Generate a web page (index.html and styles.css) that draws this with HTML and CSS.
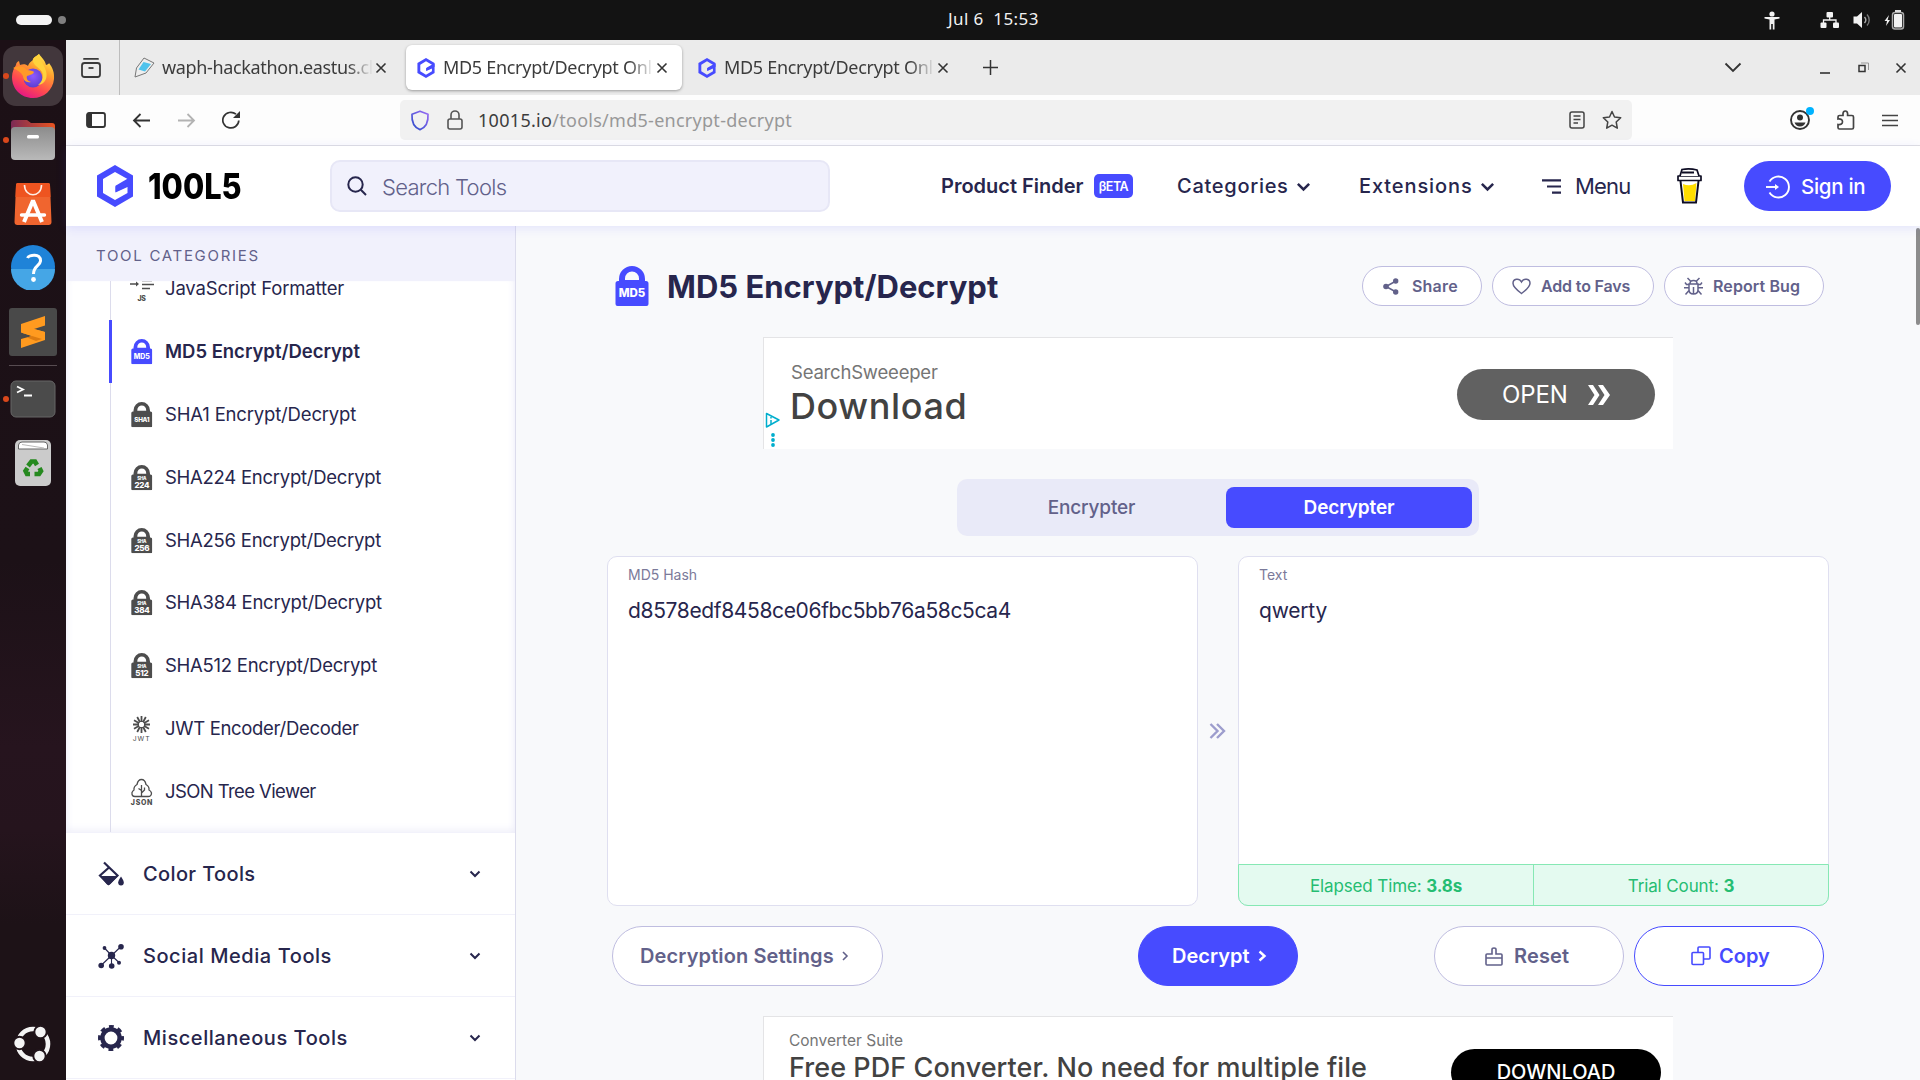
FILE: index.html
```html
<!DOCTYPE html>
<html lang="en">
<head>
<meta charset="utf-8">
<title>MD5 Encrypt/Decrypt Online</title>
<link rel="stylesheet" href="styles.css">
</head>
<body>
<svg class="defs" width="0" height="0">
  <defs>
    <symbol id="hex" viewBox="0 0 36 42">
      <path d="M18 0 36 10.500V31.500L18 42 0 31.500V10.500Z M18 7 6 14V28L18 35 30.500 28V22L18.500 27.500V21.500L26 17.500 30.500 15V14Z" fill="#474bff" fill-rule="evenodd"/>
      <path d="M30 14 L18.500 20.800V27L36 18.500V12Z" fill="#474bff"/>
    </symbol>
    <symbol id="x" viewBox="0 0 12 12"><path d="M1.500 1.500 10.500 10.500M10.500 1.500 1.500 10.500" stroke="#333" stroke-width="1.600" fill="none"/></symbol>
    <symbol id="chev" viewBox="0 0 12 8"><path d="M1.500 1.500 6 6 10.500 1.500" fill="none" stroke="currentColor" stroke-width="2"/></symbol>
    <symbol id="lock" viewBox="0 0 34 40">
      <path d="M4 15V13a13 13 0 0 1 26 0V15H31a2.500 2.500 0 0 1 2.500 2.500V38a2 2 0 0 1-2 2H2.500a2 2 0 0 1-2-2V17.500A2.500 2.500 0 0 1 3 15ZM10 14H24V12.500a7 7 0 0 0-14 0Z" fill="currentColor" fill-rule="evenodd"/>
    </symbol>
  </defs>
</svg>

<header class="topbar">
  <div class="workspaces"><i class="pill"></i><i class="dot"></i></div>
  <div class="clock">Jul 6&nbsp; 15:53</div>
  <div class="tray">
    <svg class="t-acc" width="16" height="19" viewBox="0 0 16 19" fill="#f2f2f2"><circle cx="8" cy="3" r="2.600"/><path d="M.5 6H15.500V7.600L10.500 8.600V18.500H8.800V13H7.200V18.500H5.500V8.600L.5 7.600Z"/></svg>
    <svg class="t-net" width="20" height="18" viewBox="0 0 20 18" fill="#f2f2f2"><rect x="6.500" y="1" width="6.500" height="5.500" rx="1"/><rect x=".5" y="11.500" width="6" height="5.500" rx="1"/><rect x="13" y="11.500" width="6" height="5.500" rx="1"/><path d="M9.700 6V9M3.500 12V9H16V12" fill="none" stroke="#f2f2f2" stroke-width="1.300"/></svg>
    <svg class="t-vol" width="19" height="18" viewBox="0 0 19 18"><path d="M.5 5.500H4L9 1V17L4 12.500H.5Z" fill="#f2f2f2"/><path d="M11.500 6a4.500 4.500 0 0 1 0 6" stroke="#aaa" stroke-width="1.400" fill="none"/><path d="M14 3.500a8 8 0 0 1 0 11" stroke="#777" stroke-width="1.400" fill="none"/></svg>
    <svg class="t-bat" width="21" height="20" viewBox="0 0 21 20"><path d="M5 5 .5 11H3L2 16 6 10H3.600Z" fill="#f2f2f2"/><rect x="8.500" y="2.500" width="11" height="16.500" rx="2.500" fill="none" stroke="#aaa" stroke-width="1.500"/><rect x="10" y="4" width="8" height="13.500" rx="1" fill="#f2f2f2"/><rect x="11" y="0" width="6" height="2" fill="#ddd"/></svg>
  </div>
</header>

<div class="desk">
<nav class="dock">
  <div class="slot tile run">
    <svg width="44" height="46" viewBox="0 0 44 46">
      <defs><linearGradient id="ff" x1=".8" y1="0" x2=".3" y2="1"><stop offset="0" stop-color="#fff44f"/><stop offset=".35" stop-color="#ff9f2e"/><stop offset=".7" stop-color="#ff4a50"/><stop offset="1" stop-color="#e31587"/></linearGradient>
      <radialGradient id="fp" cx=".5" cy=".4" r=".6"><stop offset="0" stop-color="#9059ff"/><stop offset="1" stop-color="#5b3fd0"/></radialGradient></defs>
      <path d="M28 1C31 5 34 7 35 12 37 11 38 11 38 10 42 15 43.500 20 43 26 42 37 33 45 22 45 10 45 1 36 1 24 1 19 3 15 5 12 5 10 6 9 8 8L9 12C12 11 15 11 17 13 18 9 22 8 22 6 24 3 26 3 28 1Z" fill="url(#ff)"/>
      <circle cx="22" cy="25" r="9.500" fill="url(#fp)"/>
      <path d="M2 15C8 12 13 13 16 17 19 17 22 18 23 19 22 22 18 22 16 23 15 26 17 28 20 29 15 30 12 27 12 23 10 19 6 17 2 15Z" fill="#ff9a28"/>
      <path d="M22 6C21 12 28 14 31 19 33 24 31 29 27 32 34 31 37 25 35 18 34 13 30 10 28 1 26 3 24 3 22 6Z" fill="#ffd23c"/>
    </svg>
  </div>
  <div class="slot files run"><svg width="46" height="42" viewBox="0 0 46 42"><defs><linearGradient id="fo"><stop offset="0" stop-color="#7c2a55"/><stop offset="1" stop-color="#e95420"/></linearGradient><linearGradient id="fg" x2="0" y2="1"><stop offset="0" stop-color="#8c8c8c"/><stop offset="1" stop-color="#b9b9b9"/></linearGradient></defs><path d="M1 4Q1 1 4 1H17L21 4H42Q45 4 45 7V20H1Z" fill="url(#fo)"/><rect x="1" y="8" width="44" height="33" rx="4" fill="url(#fg)"/><rect x="17" y="16" width="12" height="3.500" rx="1.500" fill="#fff"/></svg></div>
  <div class="slot store"><svg width="38" height="44" viewBox="0 0 38 44"><path d="M4 1H34Q36 1 36 3L37.500 40Q37.500 43 34.500 43H3.500Q.5 43 .5 40L2 3Q2 1 4 1Z" fill="#f0652f"/><path d="M2 3Q2 1 4 1H34Q36 1 36 3L36.500 15H1.500Z" fill="#ee5420"/><path d="M10.500 3C10.500 16 27.500 16 27.500 3" stroke="#fdeee6" stroke-width="1.600" fill="none"/><path d="M10 40 19 18.500 28 40" stroke="#fff" stroke-width="4" fill="none" stroke-linejoin="bevel"/><path d="M7.500 33H30.500" stroke="#fff" stroke-width="3.400" stroke-linecap="round"/></svg></div>
  <div class="slot help"><svg width="46" height="46" viewBox="0 0 46 46"><circle cx="23" cy="23" r="22" fill="#1f83d8"/><path d="M1 25A22 22 0 0 0 45 25Z" fill="#45a6e6"/><path d="M17.500 14C19 10.500 31 9 30.500 17 30 22 23.500 22 23.500 30" fill="none" stroke="#fff" stroke-width="3"/><circle cx="23.500" cy="35.500" r="2.400" fill="#fff"/></svg></div>
  <div class="slot sub"><svg width="48" height="48" viewBox="0 0 48 48"><rect width="48" height="48" rx="3" fill="#494949"/><path d="M36 8V17.500L25 21 36 24V32L12 40V31L23 28 12 24.500V16Z" fill="#ff9a1f"/><path d="M12 24.500 23 28 36 32 36 24 25 21Z" fill="#ff9a1f"/><path d="M18 29.500 23 28 33 31 27 33Z" fill="#dd7b10"/></svg></div>
  <i class="dock-line"></i>
  <div class="slot term run"><svg width="46" height="38" viewBox="0 0 46 38"><rect x="1" y="1" width="44" height="36" rx="5" fill="#4b4b4b" stroke="#666"/><path d="M7 6.500 13 9.500 7 12.500M14 15.500H22" fill="none" stroke="#fff" stroke-width="1.800"/></svg></div>
  <div class="slot trash"><svg width="38" height="48" viewBox="0 0 38 48"><rect x="1" y="1" width="36" height="46" rx="5" fill="#cbcbcb"/><path d="M4.500 10V6Q5 3 8 3H30Q33 3 33.500 6V10Z" fill="#fff" stroke="#666"/><path d="M8 5.500 30 9" stroke="#bbb"/><g fill="none" stroke="#26891f" stroke-width="4.600"><path d="M14 27 17.500 22.500H21L23 26"/><path d="M25.500 29 27 32 25 35H20.500"/><path d="M16 35H13L11.500 32 13.500 29"/></g></svg></div>
  <div class="slot ubuntu"><svg width="38" height="38" viewBox="0 0 38 38"><circle cx="19" cy="19" r="15" fill="none" stroke="#f4f4f4" stroke-width="4.600"/><g fill="#f4f4f4" stroke="#20141a" stroke-width="2"><circle cx="5.500" cy="18" r="6.200"/><circle cx="26.500" cy="7" r="6.200"/><circle cx="25.500" cy="31" r="6.200"/></g></svg></div>
</nav>

<main class="window">
  <div class="tabs">
    <div class="tabview"><svg width="22" height="22" viewBox="0 0 22 22" fill="none" stroke="#3a3a3a" stroke-width="1.800"><path d="M4 1.900H18" stroke-linecap="round"/><rect x="2" y="6" width="18" height="14" rx="2.500"/><path d="M8.500 11H13.500"/></svg></div>
    <div class="tab">
      <svg class="fav" width="21" height="21" viewBox="0 0 21 21"><path d="M10 1 20 6 12 16 1 20 2.500 11Z" fill="#eee" stroke="#777"/><path d="M9.500 5 17 7 11 14.500 4.500 12.500Z" fill="#4fc3ec"/></svg>
      <span class="tab-t waph">waph-hackathon.eastus.cl</span><svg width="12" height="12"><use href="#x"/></svg>
    </div>
    <div class="tab active">
      <svg class="fav" width="18" height="20"><use href="#hex"/></svg>
      <span class="tab-t">MD5 Encrypt/Decrypt Onl</span><svg width="12" height="12"><use href="#x"/></svg>
    </div>
    <div class="tab">
      <svg class="fav" width="18" height="20"><use href="#hex"/></svg>
      <span class="tab-t">MD5 Encrypt/Decrypt Onl</span><svg width="12" height="12"><use href="#x"/></svg>
    </div>
    <svg class="newtab" width="15" height="15" viewBox="0 0 15 15"><path d="M7.500 0V15M0 7.500H15" stroke="#333" stroke-width="1.500"/></svg>
    <div class="winctl">
      <svg width="18" height="11" viewBox="0 0 18 11"><path d="M1.500 1.500 9 9 16.500 1.500" fill="none" stroke="#333" stroke-width="1.800"/></svg>
      <svg class="w-min" width="10" height="10" viewBox="0 0 10 10"><path d="M0 9H10" stroke="#333" stroke-width="1.600"/></svg>
      <svg class="w-max" width="11" height="11" viewBox="0 0 11 11"><path d="M3 1H10.500V8" fill="none" stroke="#999"/><rect x="1" y="3.500" width="6" height="6" fill="none" stroke="#333" stroke-width="1.500"/></svg>
      <svg class="w-cls" width="12" height="12"><use href="#x"/></svg>
    </div>
  </div>

  <div class="toolbar">
    <div class="navbtns">
      <svg width="20" height="16" viewBox="0 0 20 16"><rect x="1" y="1" width="18" height="14" rx="2" fill="none" stroke="#333" stroke-width="1.800"/><path d="M1 1H6V15H1Z" fill="#333"/></svg>
      <svg width="19" height="15" viewBox="0 0 19 15"><path d="M18 7.500H2M8.500 1 2 7.500 8.500 14" fill="none" stroke="#333" stroke-width="1.800"/></svg>
      <svg width="19" height="15" viewBox="0 0 19 15"><path d="M1 7.500H17M10.500 1 17 7.500 10.500 14" fill="none" stroke="#b3b3b3" stroke-width="1.800"/></svg>
      <svg width="19" height="18" viewBox="0 0 19 18"><path d="M16.800 9.500A8 7.800 0 1 1 14 3.200" fill="none" stroke="#333" stroke-width="1.700"/><path d="M18 0V7H11Z" fill="#333"/></svg>
    </div>
    <div class="url">
      <svg width="20" height="21" viewBox="0 0 20 21"><defs><linearGradient id="sh" x1="1" y1="0" x2="0" y2="1"><stop offset="0" stop-color="#9a6bf5"/><stop offset="1" stop-color="#2a4bc8"/></linearGradient></defs><path d="M10 1.200 18 4.200C18.500 12 15.500 17.500 10 19.600 4.500 17.500 1.500 12 2 4.200Z" fill="none" stroke="url(#sh)" stroke-width="1.700" stroke-linejoin="round"/></svg>
      <svg class="padlock" width="16" height="20" viewBox="0 0 16 20" fill="none" stroke="#555" stroke-width="1.600"><rect x="1" y="9" width="14" height="10" rx="2"/><path d="M4 9V5a4 4 0 0 1 8 0V9"/></svg>
      <span class="host">10015.io</span><span class="path">/tools/md5-encrypt-decrypt</span>
      <svg class="reader" width="16" height="18" viewBox="0 0 16 18" fill="none" stroke="#444" stroke-width="1.500"><rect x="1" y="1" width="14" height="16" rx="2"/><path d="M4.500 5H11.500M4.500 8.500H11.500M4.500 12H9"/></svg>
      <svg width="20" height="20" viewBox="0 0 20 20"><path d="M10 1.500 12.500 7 18.700 7.700 14.200 12 15.300 18.200 10 15.200 4.700 18.200 5.800 12 1.300 7.700 7.500 7Z" fill="none" stroke="#444" stroke-width="1.500" stroke-linejoin="round"/></svg>
    </div>
    <div class="tools">
      <svg width="26" height="28" viewBox="0 0 26 28"><circle cx="11" cy="17" r="9" fill="none" stroke="#333" stroke-width="1.900"/><circle cx="11" cy="14.500" r="3" fill="#333"/><path d="M5.500 19.500H16.500Q15 23.500 11 23.500T5.500 19.500Z" fill="#333"/><circle cx="21" cy="8" r="4" fill="#00b3ff"/></svg>
      <svg width="18" height="20" viewBox="0 0 18 20"><path d="M2.500 19Q1 19 1 17.500V14.500Q5.500 15 5.500 11.800T1 9V7Q1 5.500 2.500 5.500H6V3.500Q6.300 1 8.300 1T10.600 3.500V5.500H15Q16.500 5.500 16.500 7V17.500Q16.500 19 15 19Z" fill="none" stroke="#444" stroke-width="1.700"/></svg>
      <svg width="16" height="13" viewBox="0 0 16 13"><path d="M0 1.500H16M0 6.500H16M0 11.500H16" stroke="#444" stroke-width="1.500"/></svg>
    </div>
  </div>

  <div class="sitehead">
    <svg class="logo" width="36" height="42"><use href="#hex"/></svg>
    <span class="brand">100L5</span>
    <div class="search"><svg width="20" height="20" viewBox="0 0 20 20" fill="none" stroke="#27264d" stroke-width="2"><circle cx="8.500" cy="8.500" r="7.200"/><path d="M13.800 13.800 19 19"/></svg><span>Search Tools</span></div>
    <span class="finder">Product Finder</span><span class="beta">βETA</span>
    <span class="menu-t cat">Categories</span><svg class="hchev" width="15" height="10"><use href="#chev"/></svg>
    <span class="menu-t ext">Extensions</span><svg class="hchev" width="15" height="10"><use href="#chev"/></svg>
    <svg class="burger" width="19" height="15" viewBox="0 0 19 15"><path d="M0 1.300H19M5 7.500H19M10 13.700H19" stroke="#27264d" stroke-width="2.200"/></svg>
    <span class="menuword">Menu</span>
    <svg class="cup" width="25" height="36" viewBox="0 0 25 36"><path d="M6 16Q13 19 19.500 15L18 33H7.500Z" fill="#ffdd00"/><path d="M3.500 13 6 34.500H19L21.500 13" fill="none" stroke="#0d0c23" stroke-width="2"/><path d="M1 8H24V12.500H1Z" fill="#fff" stroke="#0d0c23" stroke-width="1.700" stroke-linejoin="round"/><path d="M3 8 5 1.500Q12.500 0 20 2L22 8" fill="#fff" stroke="#0d0c23" stroke-width="1.700"/><path d="M5 4.500H17" stroke="#0d0c23" stroke-width="2"/></svg>
    <div class="signin"><svg width="24" height="24" viewBox="0 0 24 24" fill="none" stroke="#fff" stroke-width="1.900"><path d="M3.500 6.500a10.500 10.500 0 1 1 0 11"/><path d="M0 12H11"/><path d="M9 9 13 12 9 15Z" fill="#fff" stroke="none"/></svg><span>Sign in</span></div>
  </div>

  <div class="page">
    <aside class="side">
      <div class="cathead">TOOL CATEGORIES</div>
      <div class="list"><div class="items">
        <div class="item"><svg width="26" height="28" viewBox="0 0 26 28"><path d="M0 9H7M12 1.500H24M12 5.500H22M12 9.500H24M12 13.500H20" stroke="#4d4d4d" stroke-width="1.400"/><path d="M6 6.500 9 9 6 11.500Z" fill="#4d4d4d"/><text x="11.500" y="26" class="svt" font-size="7" fill="#4d4d4d">JS</text></svg><span class="i-js">JavaScript Formatter</span></div>
        <div class="item on"><svg width="26" height="28" viewBox="0 0 26 28"><use href="#lock" x="1" y="1" width="21.500" height="25.300"/><text x="11.800" y="20.500" class="svt" font-size="7">MD5</text></svg><span>MD5 Encrypt/Decrypt</span></div>
        <div class="item"><svg width="26" height="28" viewBox="0 0 26 28"><use href="#lock" x="1" y="1" width="21.500" height="25.300"/><text x="11.800" y="21" class="svt" font-size="6.300">SHA1</text></svg><span class="i-1">SHA1 Encrypt/Decrypt</span></div>
        <div class="item"><svg width="26" height="28" viewBox="0 0 26 28"><use href="#lock" x="1" y="1" width="21.500" height="25.300"/><text x="11.800" y="16" class="svt" font-size="4.500">SHA</text><text x="11.800" y="23.700" class="svt" font-size="8">224</text></svg><span>SHA224 Encrypt/Decrypt</span></div>
        <div class="item"><svg width="26" height="28" viewBox="0 0 26 28"><use href="#lock" x="1" y="1" width="21.500" height="25.300"/><text x="11.800" y="16" class="svt" font-size="4.500">SHA</text><text x="11.800" y="23.700" class="svt" font-size="8">256</text></svg><span>SHA256 Encrypt/Decrypt</span></div>
        <div class="item"><svg width="26" height="28" viewBox="0 0 26 28"><use href="#lock" x="1" y="1" width="21.500" height="25.300"/><text x="11.800" y="16" class="svt" font-size="4.500">SHA</text><text x="11.800" y="23.700" class="svt" font-size="8">384</text></svg><span>SHA384 Encrypt/Decrypt</span></div>
        <div class="item"><svg width="26" height="28" viewBox="0 0 26 28"><use href="#lock" x="1" y="1" width="21.500" height="25.300"/><text x="11.800" y="16" class="svt" font-size="4.500">SHA</text><text x="11.800" y="23.700" class="svt" font-size="8">512</text></svg><span>SHA512 Encrypt/Decrypt</span></div>
        <div class="item"><svg width="26" height="28" viewBox="0 0 26 28"><path d="M11.500 1V7M11.500 12V18M3 9.500H9M14 9.500H20M7.200 2 10 7.200M13 11.800 15.800 17M15.800 2 13 7.200M10 11.800 7.200 17M4 5.200 9.200 8.200M13.800 10.800 19 13.800M19 5.200 13.800 8.200M9.200 10.800 4 13.800" stroke="#4d4d4d" stroke-width="1.800"/><text x="11.700" y="26" class="svt thin" font-size="6.800" fill="#4d4d4d">JWT</text></svg><span class="i-jwt">JWT Encoder/Decoder</span></div>
        <div class="item"><svg width="26" height="28" viewBox="0 0 26 28"><path d="M5 18.500Q1.500 18.500 2 14.500 3 12.500 4 12 3.500 8.500 7 6.500 8 1.500 11.500 1.500T16 6.500Q19.500 8.500 19 12 21 13 21.500 15 21.500 18.500 18 18.500ZM11.500 18.500V7M11.500 15 14.500 12V9.500M11.500 12.500 8.500 10.500" fill="none" stroke="#4d4d4d" stroke-width="1.300"/><text x="12" y="26.500" class="svt json" font-size="7" fill="#4d4d4d">JSON</text></svg><span class="i-json">JSON Tree Viewer</span></div>
      </div></div>
      <div class="cat-row"><svg width="26" height="26" viewBox="0 0 26 26" fill="none" stroke="#27264d" stroke-width="2.200"><path d="M6 1.500 19.500 14.500 10.500 23 2 14.500 11 6.500"/><path d="M2 15H20L12.500 23Q10.500 25 8.500 23Z" fill="#27264d" stroke="none"/><path d="M23 15.500Q25.800 19.500 25.800 21.500A2.800 3 0 0 1 20.200 21.500Q20.200 19.500 23 15.500Z" fill="#27264d" stroke="none"/></svg><span class="c1">Color Tools</span><svg class="rchev" width="12" height="8"><use href="#chev"/></svg></div>
      <div class="cat-row"><svg width="26" height="26" viewBox="0 0 26 26" fill="#27264d"><path d="M13.500 12.500 23 3.500M13.500 12.500 6.500 5M13.500 12.500 3 22.500M13.500 12.500V23M13.500 12.500 21 19.500" stroke="#27264d" stroke-width="1.100"/><circle cx="13.500" cy="12.500" r="3.700"/><circle cx="23" cy="3.700" r="2.800"/><circle cx="6.500" cy="5" r="1.900"/><circle cx="3.200" cy="22.500" r="2.800"/><circle cx="13.700" cy="23" r="2.800"/><circle cx="21" cy="19.700" r="2"/></svg><span class="c2">Social Media Tools</span><svg class="rchev" width="12" height="8"><use href="#chev"/></svg></div>
      <div class="cat-row"><svg width="26" height="26" viewBox="0 0 26 26"><circle cx="13" cy="13" r="8.600" fill="none" stroke="#27264d" stroke-width="4.400"/><circle cx="13" cy="13" r="11.500" fill="none" stroke="#27264d" stroke-width="3" stroke-dasharray="4.800 4.232" stroke-dashoffset="2.400"/></svg><span class="c3">Miscellaneous Tools</span><svg class="rchev" width="12" height="8"><use href="#chev"/></svg></div>
    </aside>

    <section class="content">
      <div class="titlebar">
        <svg class="biglock" width="34" height="40" viewBox="0 0 34 40"><use href="#lock" width="34" height="40"/><text x="17" y="31.200" class="svt" font-size="11.500">MD5</text></svg>
        <h1>MD5 Encrypt/Decrypt</h1>
        <div class="act share"><svg width="16" height="17" viewBox="0 0 16 17" fill="#62618a"><path d="M13 3 3 8.500 13 14" fill="none" stroke="#62618a" stroke-width="1.500"/><circle cx="12.700" cy="3" r="2.700"/><circle cx="3" cy="8.500" r="2.800"/><circle cx="12.700" cy="14" r="2.700"/></svg><span>Share</span></div>
        <div class="act favs"><svg width="19" height="17" viewBox="0 0 19 17"><path d="M9.500 15.500C4 11.500 1 8.500 1 5.300 1 1 7 -.5 9.500 4 12 -.5 18 1 18 5.300 18 8.500 15 11.500 9.500 15.500Z" fill="none" stroke="#62618a" stroke-width="1.500"/></svg><span>Add to Favs</span></div>
        <div class="act bug"><svg width="19" height="19" viewBox="0 0 19 19" fill="none" stroke="#62618a" stroke-width="1.500"><path d="M5 7H14V12.500Q14 17 9.500 17T5 12.500ZM6 6.500Q6 3.500 9.500 3.500T13 6.500M9.500 10V17M6.500 4 3.500 1M12.500 4 15.500 1M5 7.500H2.500L1 5.500M14 7.500H16.500L18 5.500M0 10.800H5M14 10.800H19M5 13.500 1.500 17.500M14 13.500 17.500 17.500"/></svg><span>Report Bug</span></div>
      </div>

      <div class="ad first">
        <div class="adicons"><svg width="16" height="36" viewBox="0 0 16 36"><path d="M1.500 1.500 14 8 1.500 15Z" fill="none" stroke="#00aecd" stroke-width="1.500" stroke-linejoin="round"/><path d="M6 5V6.500M6 8V12" stroke="#00aecd" stroke-width="1.500"/><g fill="#00aecd"><circle cx="8" cy="23" r="1.900"/><circle cx="8" cy="28" r="1.900"/><circle cx="8" cy="33" r="1.900"/></g></svg></div>
        <div class="adtext"><div class="adname">SearchSweeeper</div><div class="adbig">Download</div></div>
        <div class="open"><span>OPEN</span><svg width="22" height="20" viewBox="0 0 22 20" fill="#fff"><path d="M0 0H5L11.500 10 5 20H0L6.500 10ZM10 0H15L22 10 15 20H10L16.500 10Z"/></svg></div>
      </div>

      <div class="toggle"><div class="off">Encrypter</div><div class="sel">Decrypter</div></div>

      <div class="panes">
        <div class="pane"><label>MD5 Hash</label><div class="val hash">d8578edf8458ce06fbc5bb76a58c5ca4</div></div>
        <svg class="dbl" width="17" height="16" viewBox="0 0 17 16"><path d="M1.500 1 8.500 8 1.500 15M8 1 15 8 8 15" fill="none" stroke="#9d9dcd" stroke-width="2.400"/></svg>
        <div class="pane out"><label>Text</label><div class="val">qwerty</div>
          <div class="stats"><div>Elapsed Time: <b>3.8s</b></div><div>Trial Count: <b>3</b></div></div>
        </div>
      </div>

      <div class="actions">
        <div class="btn settings"><span>Decryption Settings</span><svg width="7" height="10" viewBox="0 0 7 10"><path d="M1 1 5 5 1 9" fill="none" stroke="currentColor" stroke-width="1.600"/></svg></div>
        <div class="btn decrypt"><span>Decrypt</span><svg width="9" height="12" viewBox="0 0 9 12"><path d="M1.500 1.500 6.500 6 1.500 10.500" fill="none" stroke="currentColor" stroke-width="2.400"/></svg></div>
        <div class="btn reset"><svg width="18" height="19" viewBox="0 0 18 19" fill="none" stroke="#62618a" stroke-width="1.600"><path d="M2 7H7V2.500Q7 1 9 1T11 2.500V7H16Q17 7 17 8V17Q17 18 16 18H2Q1 18 1 17V8Q1 7 2 7ZM1 11H17"/></svg><span>Reset</span></div>
        <div class="btn copy"><svg width="20" height="20" viewBox="0 0 20 20" fill="none" stroke="#474bff" stroke-width="1.600"><rect x="1" y="6.500" width="11.500" height="12" rx="1"/><path d="M7 6.500V2Q7 1 8 1H18Q19 1 19 2V12Q19 13 18 13H12.500"/></svg><span>Copy</span></div>
      </div>

      <div class="ad second">
        <div class="adtext"><div class="adname">Converter Suite</div><div class="adbig">Free PDF Converter. No need for multiple file</div></div>
        <div class="dl">DOWNLOAD</div>
      </div>
    </section>
    <i class="scroll"></i>
  </div>
</main>
</div>
</body>
</html>
```
FILE: styles.css
```css
* { box-sizing: border-box; }
body {
  margin: 0; width: 1920px; height: 1080px; overflow: hidden;
  font-family: "Inter", sans-serif; color: #27264d; background: #131313;
  white-space: nowrap;
}
svg { display: block; flex: none; }
i { display: block; }
.defs { position: absolute; }

/* desktop top bar */
.topbar { height: 40px; display: flex; align-items: center; background: #131313; color: #f2f2f2; }
.workspaces { width: 948px; padding-left: 16px; display: flex; align-items: center; gap: 6px; }
.pill { width: 36px; height: 10px; border-radius: 5px; background: #f4f4f4; }
.dot { width: 8px; height: 8px; border-radius: 50%; background: #808080; }
.clock { font: 400 17px/38px "Noto Sans", sans-serif; letter-spacing: .4px; height: 40px; flex: 1; }
.tray { display: flex; align-items: center; padding-right: 15px; }
.t-net { margin-left: 40px; }
.t-vol { margin-left: 13px; }
.t-bat { margin-left: 12px; }

/* dock */
.desk { display: flex; height: 1040px; }
.dock { width: 66px; flex: none; background: linear-gradient(#1c1016, #1c1117 50%, #26141e 68%, #25141d 76%, #1d1217 85%, #1d1217); display: flex; flex-direction: column; align-items: center; padding-top: 6px; }
.slot { width: 60px; height: 60px; flex: none; display: flex; align-items: center; justify-content: center; position: relative; }
.run::before { content: ""; position: absolute; left: 0; top: 27px; width: 6px; height: 6px; border-radius: 50%; background: #d9481c; }
.tile { border-radius: 13px; background: #42373c; }
.files { margin-top: 4px; }
.store { margin-top: 4px; }
.help { margin-top: 3px; }
.sub { margin-top: 5px; }
.dock-line { width: 48px; height: 1px; background: #574c51; margin-top: 3px; }
.term { margin-top: 3px; }
.trash { margin-top: 4px; }
.ubuntu { margin-top: 521px; }

.window { flex: 1; display: flex; flex-direction: column; min-width: 0; }

/* tab strip */
.tabs { height: 55px; background: #ebebeb; display: flex; align-items: center; font: 400 18px/24px "Noto Sans", sans-serif; color: #3c3c3c; }
.tabview { width: 54px; height: 55px; padding-left: 14px; border-right: 1px solid #bdbdbd; display: flex; align-items: center; }
.tab { width: 276px; height: 45px; margin-left: 5px; padding-left: 11px; display: flex; align-items: center; border-radius: 6px; }
.tab + .tab { margin-left: 5px; }
.tabview + .tab { padding-left: 9px; }
.active { background: #fff; box-shadow: 0 1px 3px rgba(0,0,0,.35); }
.tab .fav { margin-right: 8px; }
.tabview + .tab .fav { margin-right: 7px; }
.tab-t { width: 211px; letter-spacing: -.3px; margin: 0 2px 2px 0; -webkit-mask-image: linear-gradient(90deg, #000 88%, transparent); mask-image: linear-gradient(90deg, #000 88%, transparent); }
.waph { letter-spacing: -.35px; }
.newtab { margin-left: 20px; }
.winctl { flex: 1; display: flex; align-items: center; justify-content: flex-end; padding-right: 13px; }
.w-min { margin: 2px 0 0 78px; }
.w-max { margin-left: 28px; }
.w-cls { margin-left: 26px; }

/* toolbar */
.toolbar { height: 51px; flex: none; background: #fdfdfd; border-bottom: 1px solid #e0e0e2; display: flex; align-items: center; }
.navbtns { width: 334px; display: flex; align-items: center; gap: 26px; padding-left: 20px; }
.url { width: 1232px; height: 40px; border-radius: 5px; background: #f1f1f1; display: flex; align-items: center; padding: 0 10px 0 10px; font: 400 18px/38px "Noto Sans", sans-serif; color: #3c3c3c; }
.padlock { margin: 0 15px 0 17px; }
.host { letter-spacing: .3px; }
.path { letter-spacing: .27px; color: #989898; flex: 1; }
.reader { margin-right: 17px; }
.tools { flex: 1; display: flex; align-items: center; padding-left: 157px; }
.tools svg:first-child { margin-bottom: 7px; }
.tools svg:nth-child(2) { margin-left: 22px; }
.tools svg:nth-child(3) { margin-left: 27px; }

/* site header */
.sitehead { height: 80px; flex: none; background: #fff; display: flex; align-items: center; padding-left: 31px; box-shadow: 0 2px 10px rgba(71,75,255,.12); position: relative; z-index: 1; }
.brand { width: 93px; margin-left: 15px; font: 800 36px/40px "Inter", sans-serif; color: #000; transform: scaleX(.855); transform-origin: 0 50%; }
.search { width: 500px; height: 52px; margin-left: 89px; border: 2px solid #e7e7f6; border-radius: 10px; background: #f1f1fc; display: flex; align-items: center; padding-left: 15px; gap: 15px; font-size: 22px; letter-spacing: -.7px; color: #62618a; font-weight: 300; }
.search span { padding-top: 1px; }
.finder { width: 141px; margin-left: 111px; font-size: 20px; font-weight: 600; }
.beta { flex: none; width: 39px; height: 24px; margin-left: 12px; border-radius: 5px; background: #474bff; color: #fff; font-weight: 600; font-size: 12.5px; letter-spacing: -.5px; display: flex; align-items: center; justify-content: center; }
.menu-t { width: 111px; flex: none; font-size: 20px; font-weight: 500; letter-spacing: .72px; }
.cat { margin-left: 44px; }
.ext { margin-left: 48px; width: 113px; letter-spacing: .9px; }
.hchev { margin: 2px 0 0 8px; }
.burger { margin-left: 47px; }
.menuword { margin-left: 14px; width: 56px; font-size: 22px; letter-spacing: -.8px; }
.cup { margin-left: 46px; }
.signin { margin-left: 42px; width: 147px; height: 50px; border-radius: 25px; background: #474bff; color: #fff; display: flex; align-items: center; padding: 1px 0 0 22px; gap: 11px; font-size: 20.5px; letter-spacing: -.3px; font-weight: 500; }

/* page */
.page { flex: 1; display: flex; min-height: 0; background: #f8f9fb; position: relative; }
.side { width: 450px; flex: none; border-right: 1px solid #dcdcec; background: #fff; }
.cathead { height: 55px; padding: 3px 0 0 30px; background: #f1f1fc; font-size: 15px; line-height: 54px; letter-spacing: 1.7px; color: #62618a; }
.list { height: 552px; overflow: hidden; padding-left: 44px; box-shadow: inset 0 -8px 10px -6px #ececf8, inset 6px 0 8px -6px #ececf8, inset -6px 0 8px -6px #ececf8; }
.items { margin-top: -24px; height: 575px; border-left: 1px solid #dcdcec; }
.item { height: 62.8px; display: flex; align-items: center; padding-left: 19px; gap: 9px; font-size: 18.5px; letter-spacing: -.26px; color: #27264d; }
.item svg { color: #4d4d4d; margin-top: 2px; }
.on { margin-left: -2px; border-left: 3px solid #474bff; padding-left: 18px; font-weight: 600; letter-spacing: -.02px; }
.on svg { color: #474bff; }
.i-js { letter-spacing: -.17px; }
.i-1 { letter-spacing: -.17px; }
.i-jwt { letter-spacing: -.32px; }
.i-json { letter-spacing: -.6px; }
.svt { font-family: "Inter", sans-serif; font-weight: 800; text-anchor: middle; fill: #fff; }
.svt[fill] { fill: #4d4d4d; }
.thin { font-weight: 400; letter-spacing: 1px; }
.json { letter-spacing: .7px; }
.cat-row { height: 82px; border-bottom: 1px solid #f1f1fa; display: flex; align-items: center; padding: 0 34px 0 32px; font-size: 20px; font-weight: 500; letter-spacing: .56px; }
.cat-row span { flex: 1; margin-left: 19px; }
.cat-row .c1 { letter-spacing: .37px; }

.content { flex: 1; padding: 40px 91px 0 91px; }
.titlebar { display: flex; align-items: center; height: 40px; padding: 0 5px 0 8px; }
.biglock { color: #474bff; }
h1 { margin: 0 0 0 18px; padding-top: 2px; flex: 1; font-size: 31px; line-height: 40px; font-weight: 700; }
.act { height: 40px; border: 1px solid #bfbde0; border-radius: 20px; background: #fff; display: flex; align-items: center; font-size: 16px; font-weight: 600; color: #62618a; margin-left: 10px; }
.share { width: 120px; padding-left: 20px; gap: 13px; letter-spacing: .2px; }
.favs { width: 162px; padding-left: 19px; gap: 10px; letter-spacing: -.15px; }
.bug { width: 160px; padding-left: 19px; gap: 10px; letter-spacing: .1px; }

.ad { width: 910px; margin: 0 auto; background: #fff; border: solid #e4e4e6; border-width: 1px 0 0 1px; display: flex; }
.first { height: 112px; margin-top: 31px; }
.adicons { width: 27px; padding: 74px 0 0 1px; }
.adtext { flex: 1; }
.adname { color: #757575; }
.adbig { color: #424242; font-weight: 500; }
.first .adname { font-size: 18.5px; line-height: 24px; margin-top: 22px; letter-spacing: -.2px; }
.first .adbig { font-size: 36px; line-height: 44px; letter-spacing: .6px; margin-left: -1px; }
.open { width: 198px; height: 51px; margin: 31px 18px 0 0; border-radius: 26px; background: #616161; color: #fff; display: flex; align-items: center; padding-left: 45px; font-size: 24px; letter-spacing: -.1px; }
.open span { width: 86px; }

.toggle { width: 522px; height: 57px; margin: 30px auto 0; padding: 8px 7px 8px 8px; border-radius: 10px; background: #e9eaf8; display: flex; text-align: center; font-size: 19px; line-height: 41px; letter-spacing: -.15px; }
.off { flex: 1; padding-right: 8px; color: #62618a; font-weight: 500; }
.sel { width: 246px; height: 41px; border-radius: 8px; background: #474bff; color: #fff; font-weight: 600; }

.panes { height: 350px; margin-top: 20px; display: flex; }
.pane { flex: 1; border: 1px solid #dfdff0; border-radius: 10px; background: #fff; padding: 9px 0 0 20px; display: flex; flex-direction: column; }
.pane label { font-size: 14px; line-height: 18px; color: #7b7a9a; }
.val { font-size: 21px; line-height: 30px; margin-top: 12px; flex: 1; letter-spacing: -.2px; }
.hash { letter-spacing: -.36px; }
.dbl { align-self: center; margin: 0 12px 0 11px; }
.out { padding-right: 0; }
.stats { height: 42px; margin: 0 -1px -1px -21px; border: 1px solid #86e8b4; border-radius: 0 0 10px 10px; background: #e4faf0; display: flex; color: #25bd72; font-size: 17px; line-height: 42px; text-align: center; letter-spacing: -.12px; }
.stats div { flex: 1; }
.stats div + div { border-left: 1px solid #86e8b4; }

.actions { height: 60px; margin-top: 20px; display: flex; padding: 0 5px; }
.btn { height: 60px; border: 1px solid #bfbde0; border-radius: 30px; background: #fff; display: flex; align-items: center; font-size: 20px; font-weight: 600; color: #62618a; }
.settings { width: 271px; padding-left: 27px; gap: 8px; letter-spacing: .12px; }
.decrypt { width: 160px; margin-left: 255px; padding-left: 33px; gap: 9px; background: #474bff; border-color: #474bff; color: #fff; }
.reset { width: 190px; margin-left: 136px; padding-left: 50px; gap: 11px; letter-spacing: .15px; }
.copy { width: 190px; margin-left: 10px; padding-left: 56px; gap: 8px; border-color: #474bff; color: #474bff; }

.second { height: 112px; margin-top: 30px; }
.second .adtext { padding-left: 25px; }
.second .adname { font-size: 15.5px; line-height: 20px; margin-top: 14px; }
.second .adbig { font-size: 27px; line-height: 34px; letter-spacing: .06px; }
.dl { width: 210px; height: 47px; margin: 32px 12px 0 0; border-radius: 24px; background: #000; color: #fff; text-align: center; font-size: 20px; line-height: 47px; font-weight: 500; }
.scroll { position: absolute; right: 0; top: 2px; width: 4px; height: 97px; border-radius: 2px; background: #8c8c8c; }
```
